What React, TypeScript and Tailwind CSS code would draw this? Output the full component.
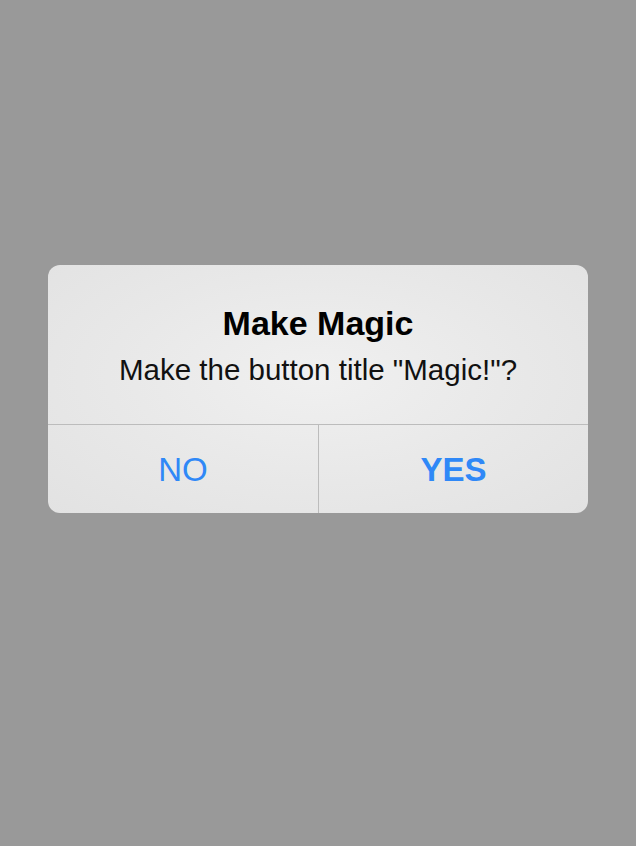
export default function App() {
    return (
        <div className="min-h-[846px] w-full bg-[#999999] flex items-start justify-center pt-[265px] font-['Liberation_Sans',Arial,sans-serif]">
            {/* Alert dialog */}
            <div className="w-[540px] rounded-[12px] overflow-hidden bg-[radial-gradient(ellipse_at_50%_45%,#f0f0f0_0%,#e8e8e8_55%,#e2e2e2_100%)]">
                <div className="flex flex-col items-center pt-[38px] pb-[36px] border-b border-[#bcbcbc]">
                    <h1 className="text-[34px] leading-[40px] font-bold text-black">Make Magic</h1>
                    <p className="mt-[8.6px] text-[29.5px] leading-[36px] text-[#111111]">
                        Make the button title "Magic!"?
                    </p>
                </div>

                {/* Buttons */}
                <div className="flex">
                    <button className="w-[270px] h-[88px] pt-[3px] flex items-center justify-center text-[33px] leading-[40px] text-[#2f88f7]">
                        NO
                    </button>
                    <button className="flex-1 h-[88px] pt-[3px] flex items-center justify-center border-l border-[#bcbcbc] text-[33px] leading-[40px] font-bold text-[#2f88f7]">
                        YES
                    </button>
                </div>
            </div>
        </div>
    );
}
